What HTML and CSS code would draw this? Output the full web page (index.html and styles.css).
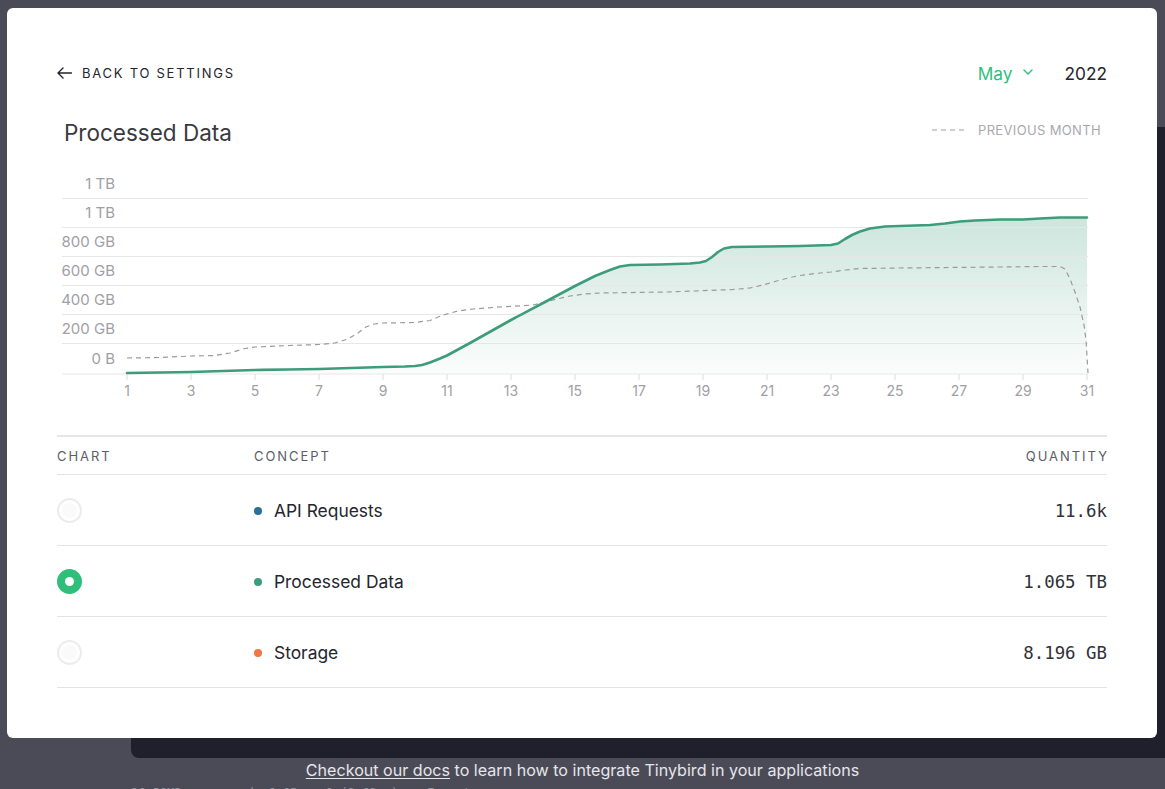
FILE: index.html
```html
<!DOCTYPE html>
<html lang="en">
<head>
<meta charset="utf-8">
<title>Processed Data</title>
<link rel="stylesheet" href="styles.css">
</head>
<body>
<div class="backdrop">
  <div class="panel"></div>
  <p class="docs"><a class="docs-link">Checkout our docs</a> to learn how to integrate Tinybird in your applications</p>
  <p class="stats">26.59MB processed, 6.65m x 1 (2.63ms)&nbsp;&nbsp;&nbsp;&nbsp;Export</p>
</div>

<div class="modal">
  <div class="topbar">
    <a class="back">
      <svg class="back-icon" width="15" height="12" viewBox="0 0 15 12"><path d="M14.5 6H1M6 1L1 6l5 5" fill="none" stroke="#25262e" stroke-width="1.4" stroke-linecap="round" stroke-linejoin="round"/></svg>
      <span>BACK TO SETTINGS</span>
    </a>
    <div class="period">
      <span class="month">May
        <svg class="chev" width="10" height="6" viewBox="0 0 10 6"><path d="M1 1l4 4 4-4" fill="none" stroke="#2fbf7b" stroke-width="1.4" stroke-linecap="round" stroke-linejoin="round"/></svg>
      </span>
      <span class="year">2022</span>
    </div>
  </div>

  <div class="chart-head">
    <h2 class="title">Processed Data</h2>
    <div class="legend">
      <svg width="36" height="4" viewBox="0 0 36 4"><line x1="0" y1="2" x2="36" y2="2" stroke="#9d9d9d" stroke-width="1.2" stroke-dasharray="5 4"/></svg>
      <span>PREVIOUS MONTH</span>
    </div>
  </div>

  <svg class="chart" width="1050" height="240" viewBox="57 165 1050 240">
    <defs>
      <linearGradient id="area" x1="0" y1="217" x2="0" y2="374" gradientUnits="userSpaceOnUse">
        <stop offset="0" stop-color="#3d9c7a" stop-opacity="0.26"/>
        <stop offset="1" stop-color="#3d9c7a" stop-opacity="0.02"/>
      </linearGradient>
    </defs>
    <g class="ylabels">
      <text x="115" y="189">1 TB</text>
      <text x="115" y="218">1 TB</text>
      <text x="115" y="247">800 GB</text>
      <text x="115" y="276">600 GB</text>
      <text x="115" y="305">400 GB</text>
      <text x="115" y="334">200 GB</text>
      <text x="115" y="364">0 B</text>
    </g>
    <path d="M127,373 L160,372.5 191,372 223,371 255,370 287,369.5 319,369 351,368 383,367 405,366.5 415,366 422,365 430,362.5 440,358.5 447,355.5 470,343 511,320 545,302 575,286 595,276 610,270 620,266.5 630,265 660,264.5 690,263.5 700,262.5 706,261 712,257 718,252 724,248.5 732,247 767,246.5 800,246 831,245 838,243.5 845,239 852,235 860,231.5 870,228.5 885,226.5 900,226 930,225 945,223.5 960,221.5 975,220.5 1000,219.5 1023,219.5 1040,218.5 1060,217.5 1087,217.5 L1087,374 L127,374 Z" fill="url(#area)"/>
    <g class="grid">
      <line x1="62" y1="198.5" x2="1088" y2="198.5"/>
      <line x1="62" y1="227.5" x2="1088" y2="227.5"/>
      <line x1="62" y1="256.5" x2="1088" y2="256.5"/>
      <line x1="62" y1="285.5" x2="1088" y2="285.5"/>
      <line x1="62" y1="314.5" x2="1088" y2="314.5"/>
      <line x1="62" y1="343.5" x2="1088" y2="343.5"/>
      <line x1="62" y1="374" x2="1088" y2="374"/>
    </g>
    <g class="ticks">
      <line x1="127" y1="374" x2="127" y2="380"/><line x1="191" y1="374" x2="191" y2="380"/>
      <line x1="255" y1="374" x2="255" y2="380"/><line x1="319" y1="374" x2="319" y2="380"/>
      <line x1="383" y1="374" x2="383" y2="380"/><line x1="447" y1="374" x2="447" y2="380"/>
      <line x1="511" y1="374" x2="511" y2="380"/><line x1="575" y1="374" x2="575" y2="380"/>
      <line x1="639" y1="374" x2="639" y2="380"/><line x1="703" y1="374" x2="703" y2="380"/>
      <line x1="767" y1="374" x2="767" y2="380"/><line x1="831" y1="374" x2="831" y2="380"/>
      <line x1="895" y1="374" x2="895" y2="380"/><line x1="959" y1="374" x2="959" y2="380"/>
      <line x1="1023" y1="374" x2="1023" y2="380"/><line x1="1087" y1="374" x2="1087" y2="380"/>
    </g>
    <g class="xlabels">
      <text x="127" y="396">1</text><text x="191" y="396">3</text><text x="255" y="396">5</text>
      <text x="319" y="396">7</text><text x="383" y="396">9</text><text x="447" y="396">11</text>
      <text x="511" y="396">13</text><text x="575" y="396">15</text><text x="639" y="396">17</text>
      <text x="703" y="396">19</text><text x="767" y="396">21</text><text x="831" y="396">23</text>
      <text x="895" y="396">25</text><text x="959" y="396">27</text><text x="1023" y="396">29</text>
      <text x="1087" y="396">31</text>
    </g>
    <polyline class="prev" points="127,358 160,357.5 191,356 215,355.5 230,353 245,348.5 255,347 290,345.5 319,344.5 335,343 348,339 358,333 366,327 374,324 383,323 415,322.5 430,320.5 443,315 458,311 473,309 500,307 533,305 545,302 557,299 570,296 585,294 600,293 667,292 733,289.5 750,288 763,285 775,281.5 790,277.5 800,275.5 815,273.5 831,272 845,270 860,268.5 900,268 950,267.5 1000,267 1040,266.5 1060,266.5 1065,269 1070,279 1075,292 1080,307 1084,325 1086,340 1088,373"/>
    <polyline class="cur" points="127,373 160,372.5 191,372 223,371 255,370 287,369.5 319,369 351,368 383,367 405,366.5 415,366 422,365 430,362.5 440,358.5 447,355.5 470,343 511,320 545,302 575,286 595,276 610,270 620,266.5 630,265 660,264.5 690,263.5 700,262.5 706,261 712,257 718,252 724,248.5 732,247 767,246.5 800,246 831,245 838,243.5 845,239 852,235 860,231.5 870,228.5 885,226.5 900,226 930,225 945,223.5 960,221.5 975,220.5 1000,219.5 1023,219.5 1040,218.5 1060,217.5 1087,217.5"/>
  </svg>

  <div class="table">
    <div class="thead">
      <span>CHART</span>
      <span>CONCEPT</span>
      <span class="right">QUANTITY</span>
    </div>
    <div class="row">
      <span class="radio"></span>
      <span class="concept"><i class="dot dot-blue"></i>API Requests</span>
      <span class="qty">11.6k</span>
    </div>
    <div class="row">
      <span class="radio radio-on"></span>
      <span class="concept"><i class="dot dot-green"></i>Processed Data</span>
      <span class="qty">1.065 TB</span>
    </div>
    <div class="row">
      <span class="radio"></span>
      <span class="concept"><i class="dot dot-orange"></i>Storage</span>
      <span class="qty">8.196 GB</span>
    </div>
  </div>
</div>
</body>
</html>
```

FILE: styles.css
```css
* { box-sizing: border-box; }

html, body {
  margin: 0;
  height: 789px;
  overflow: hidden;
}

body {
  background: #4b4b58;
  font-family: Inter, "Noto Sans", "Liberation Sans", sans-serif;
  color: #25262e;
}

/* background page */
.backdrop {
  padding-top: 127px;
}

.panel {
  margin-left: 131px;
  height: 631px;
  background: #1f202c;
  border-bottom-left-radius: 8px;
}

.docs {
  margin: 0;
  padding-top: 2px;
  text-align: center;
  font-size: 16.1px;
  line-height: 20px;
  color: #e6e6ea;
}

.docs-link {
  text-decoration: underline;
  text-underline-offset: 2px;
}

.stats {
  margin: 5px 0 0 131px;
  font-family: "DejaVu Sans Mono", monospace;
  font-size: 12px;
  line-height: 16px;
  color: #8e8e9a;
}

/* modal */
.modal {
  position: fixed;
  left: 7px;
  top: 8px;
  width: 1150px;
  height: 730px;
  background: #ffffff;
  border-radius: 6px;
  padding: 55px 50px 0;
}

.topbar {
  display: flex;
  justify-content: space-between;
  align-items: center;
  height: 20px;
}

.back {
  display: flex;
  align-items: center;
  gap: 10px;
  font-size: 13px;
  letter-spacing: 1.75px;
  color: #25262e;
}

.back-icon { display: block; }

.period {
  display: flex;
  align-items: center;
  gap: 31px;
  font-size: 17.3px;
}

.month {
  display: flex;
  align-items: center;
  gap: 11px;
  color: #2fbf7b;
}

.chev { display: block; margin-top: -2px; }

.year { color: #25262e; }

.chart-head {
  display: flex;
  justify-content: space-between;
  align-items: center;
  margin-top: 36px;
  padding: 0 6px 0 7px;
  height: 28px;
}

.title {
  margin: 0;
  font-size: 22.5px;
  font-weight: 400;
  line-height: 28px;
  color: #393a40;
}

.legend {
  display: flex;
  align-items: center;
  gap: 10px;
  font-size: 13px;
  letter-spacing: 0.35px;
  color: #a9a9ad;
  margin-top: -6px;
}

.legend svg { display: block; }

.chart {
  display: block;
  margin-top: 18px;
}

.ylabels text {
  font-family: Inter, "Liberation Sans", sans-serif;
  font-size: 15px;
  fill: #a0a0a4;
  text-anchor: end;
}

.xlabels text {
  font-family: Inter, "Liberation Sans", sans-serif;
  font-size: 14px;
  fill: #a0a0a4;
  text-anchor: middle;
}

.grid line {
  stroke: #e7e7e9;
  stroke-width: 1.2;
}

.ticks line {
  stroke: #dcdcdf;
  stroke-width: 1;
}

.prev {
  fill: none;
  stroke: #9a9a9a;
  stroke-width: 1.2;
  stroke-dasharray: 5 4;
}

.cur {
  fill: none;
  stroke: #3d9c7a;
  stroke-width: 2.6;
  stroke-linejoin: round;
  stroke-linecap: round;
}

/* table */
.table {
  margin-top: 30px;
  border-top: 2px solid #e6e6e8;
}

.thead,
.row {
  display: grid;
  grid-template-columns: 197px 1fr auto;
  align-items: center;
  border-bottom: 1px solid #e4e4e6;
}

.thead {
  height: 38px;
  font-size: 13px;
  letter-spacing: 1.95px;
  color: #5c5d66;
}

.right { text-align: right; margin-right: -1.95px; }

.row {
  height: 71px;
}

.radio {
  width: 25px;
  height: 25px;
  border-radius: 50%;
  border: 2px solid #ececef;
  background: #fafafb;
  box-shadow: inset 0 0 0 3px #ffffff;
}

.radio-on {
  border: none;
  background: #2fbf7b;
  box-shadow: none;
  position: relative;
}

.radio-on::after {
  content: "";
  position: absolute;
  left: 8px;
  top: 8px;
  width: 9px;
  height: 9px;
  border-radius: 50%;
  background: #ffffff;
}

.concept {
  display: flex;
  align-items: center;
  gap: 12px;
  font-size: 17.4px;
  color: #25262e;
  padding-top: 1px;
}

.dot {
  width: 8px;
  height: 8px;
  border-radius: 50%;
  display: inline-block;
}

.dot-blue { background: #2b6e96; }
.dot-green { background: #3d9c7a; }
.dot-orange { background: #ef7846; }

.qty {
  font-family: "DejaVu Sans Mono", "Liberation Mono", monospace;
  font-size: 17.4px;
  color: #303139;
  text-align: right;
  padding-top: 1px;
}
```
